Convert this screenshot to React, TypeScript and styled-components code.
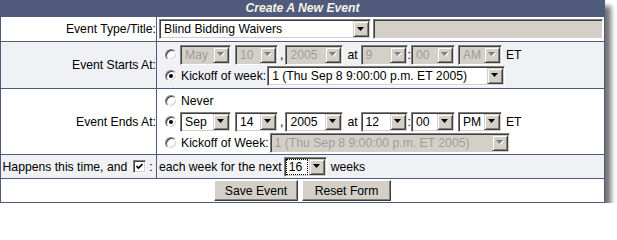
import React from "react";
import styled, { createGlobalStyle } from "styled-components";

const SLATE = "#4f5a7d";

const GlobalStyle = createGlobalStyle`
  body {
    margin: 0;
    background: #ffffff;
  }
`;

const Frame = styled.div`
  width: 603px;
  border: 1px solid ${SLATE};
  background: #ffffff;
  box-shadow: 6px 6px 5px rgba(0, 0, 0, 0.55);
  font-family: "Liberation Sans", Arial, sans-serif;
  font-size: 12.2px;
  color: #000000;
`;

const Header = styled.div`
  height: 15px;
  line-height: 15px;
  background: ${SLATE};
  color: #f4f3e6;
  font-weight: bold;
  font-style: italic;
  text-align: center;
`;

const Row = styled.div<{ $h: number; $shade?: boolean }>`
  display: grid;
  grid-template-columns: 156px 1fr;
  height: ${(p) => p.$h}px;
  border-top: 1px solid ${SLATE};
  background: ${(p) => (p.$shade ? "#eff1f4" : "#ffffff")};
`;

const Label = styled.div`
  box-sizing: border-box;
  display: flex;
  align-items: center;
  justify-content: flex-end;
  border-right: 1px solid ${SLATE};
  white-space: nowrap;
`;

const Field = styled.div<{ $pad?: string }>`
  display: flex;
  flex-direction: column;
  justify-content: center;
  padding: ${(p) => p.$pad || "0 2px"};
`;

const Line = styled.div<{ $h?: number }>`
  display: flex;
  align-items: center;
  height: ${(p) => p.$h || 21}px;
  white-space: nowrap;
`;

const Text = styled.span<{ $pad?: string }>`
  padding: ${(p) => p.$pad || "0"};
`;

const ButtonRow = styled.div`
  grid-column: 1 / -1;
  display: flex;
  justify-content: center;
  align-items: center;
  gap: 4px;
`;

const Box = styled.div<{ $w: number; $disabled?: boolean; $ml?: number }>`
  box-sizing: border-box;
  flex-shrink: 0;
  display: inline-flex;
  width: ${(p) => p.$w}px;
  height: 20px;
  margin-left: ${(p) => p.$ml || 0}px;
  padding: 1px;
  border: 1px solid;
  border-color: #808080 #ffffff #ffffff #808080;
  box-shadow: inset 1px 1px 0 #404040, inset -1px -1px 0 #d4d0c8;
  background: ${(p) => (p.$disabled ? "#d4d0c8" : "#ffffff")};
`;

const Value = styled.span<{ $disabled?: boolean; $focus?: boolean }>`
  flex: 1;
  display: flex;
  align-items: center;
  overflow: hidden;
  white-space: nowrap;
  padding-left: 3px;
  color: ${(p) => (p.$disabled ? "#9c9c9c" : "#000000")};
  ${(p) =>
    p.$focus &&
    `
    padding-left: 2px;
    margin: 0 1px 0 0;
    border: 1px dotted #000;
  `}
`;

const DropButton = styled.span`
  box-sizing: border-box;
  width: 16px;
  display: flex;
  align-items: center;
  justify-content: center;
  background: #d4d0c8;
  border: 1px solid;
  border-color: #d4d0c8 #404040 #404040 #d4d0c8;
  box-shadow: inset 1px 1px 0 #ffffff, inset -1px -1px 0 #808080;
`;

const TextBox = styled.div<{ $w: number }>`
  box-sizing: border-box;
  width: ${(p) => p.$w}px;
  height: 20px;
  margin-left: 2px;
  border: 1px solid;
  border-color: #808080 #ffffff #ffffff #808080;
  box-shadow: inset 1px 1px 0 #404040, inset -1px -1px 0 #d4d0c8;
  background: #d4d0c8;
`;

const RadioDot = styled.span<{ $on?: boolean }>`
  box-sizing: border-box;
  position: relative;
  flex-shrink: 0;
  width: 12px;
  height: 12px;
  margin: 0 3px 0 6px;
  border-radius: 50%;
  border: 1px solid;
  border-color: #808080 #ffffff #ffffff #808080;
  box-shadow: inset 1px 1px 0 #404040, inset -1px -1px 0 #d4d0c8;
  background: #ffffff;

  &::after {
    content: "";
    display: ${(p) => (p.$on ? "block" : "none")};
    position: absolute;
    left: 3px;
    top: 3px;
    width: 4px;
    height: 4px;
    border-radius: 50%;
    background: #000000;
  }
`;

const CheckBox = styled.span`
  box-sizing: border-box;
  display: inline-flex;
  align-items: center;
  justify-content: center;
  width: 13px;
  height: 13px;
  margin: 0 3px 0 6px;
  border: 1px solid;
  border-color: #808080 #ffffff #ffffff #808080;
  box-shadow: inset 1px 1px 0 #404040, inset -1px -1px 0 #d4d0c8;
  background: #ffffff;
`;

const PushButton = styled.button<{ $w: number }>`
  box-sizing: border-box;
  width: ${(p) => p.$w}px;
  height: 21px;
  padding: 0;
  font-family: "Liberation Sans", Arial, sans-serif;
  font-size: 12.2px;
  color: #000000;
  background: #d4d0c8;
  border: 1px solid;
  border-color: #ffffff #404040 #404040 #ffffff;
  box-shadow: inset -1px -1px 0 #808080;
  border-radius: 0;
`;

const Arrow: React.FC<{ disabled?: boolean }> = ({ disabled }) => (
  <svg width="8" height="5" viewBox="0 0 8 5">
    {disabled && <polygon points="1,1 8,1 4.5,5" fill="#ffffff" />}
    <polygon points="0,0 7,0 3.5,4" fill={disabled ? "#808080" : "#000000"} />
  </svg>
);

const Select: React.FC<{
  value: string;
  w: number;
  disabled?: boolean;
  focus?: boolean;
  ml?: number;
}> = ({ value, w, disabled, focus, ml }) => (
  <Box $w={w} $disabled={disabled} $ml={ml}>
    <Value $disabled={disabled} $focus={focus}>
      {value}
    </Value>
    <DropButton>
      <Arrow disabled={disabled} />
    </DropButton>
  </Box>
);

const DateTime: React.FC<{ d: string[]; disabled?: boolean }> = ({ d, disabled }) => (
  <>
    <Select value={d[0]} w={51} disabled={disabled} />
    <Select value={d[1]} w={43} ml={4} disabled={disabled} />
    <Text $pad="0 2px">,</Text>
    <Select value={d[2]} w={58} disabled={disabled} />
    <Text $pad="0 3px 0 4px">at</Text>
    <Select value={d[3]} w={47} disabled={disabled} />
    <Text $pad="0">:</Text>
    <Select value={d[4]} w={44} disabled={disabled} />
    <Select value={d[5]} w={44} ml={3} disabled={disabled} />
    <Text $pad="0 4px">ET</Text>
  </>
);

const KICKOFF = "1 (Thu Sep 8 9:00:00 p.m. ET 2005)";

export default function App() {
  return (
    <>
      <GlobalStyle />
      <Frame>
        <Header>Create A New Event</Header>

        <Row $h={24}>
          <Label>Event Type/Title:</Label>
          <Field $pad="0 1px 0 2px">
            <Line $h={24}>
              <Select value="Blind Bidding Waivers" w={212} />
              <TextBox $w={230} />
            </Line>
          </Field>
        </Row>

        <Row $h={46} $shade>
          <Label>Event Starts At:</Label>
          <Field>
            <Line>
              <RadioDot />
              <DateTime d={["May", "10", "2005", "9", "00", "AM"]} disabled />
            </Line>
            <Line>
              <RadioDot $on />
              <Text $pad="0 0 0 1px">Kickoff of week:</Text>
              <Select value={KICKOFF} w={238} ml={1} />
            </Line>
          </Field>
        </Row>

        <Row $h={65}>
          <Label>Event Ends At:</Label>
          <Field>
            <Line>
              <RadioDot />
              <Text $pad="0 0 0 1px">Never</Text>
            </Line>
            <Line>
              <RadioDot $on />
              <DateTime d={["Sep", "14", "2005", "12", "00", "PM"]} />
            </Line>
            <Line>
              <RadioDot />
              <Text $pad="0 0 0 1px">Kickoff of Week:</Text>
              <Select value={KICKOFF} w={240} ml={1} disabled />
            </Line>
          </Field>
        </Row>

        <Row $h={23} $shade>
          <Label>
            Happens this time, and
            <CheckBox>
              <svg width="7" height="7" viewBox="0 0 7 7">
                <polyline points="0.5,3 2.5,5 6.5,1" fill="none" stroke="#000" strokeWidth="1.6" />
              </svg>
            </CheckBox>
            :&nbsp;
          </Label>
          <Field>
            <Line>
              <Text>each week for the next</Text>
              <Select value="16" w={43} ml={2} focus />
              <Text $pad="0 4px">weeks</Text>
            </Line>
          </Field>
        </Row>

        <Row $h={23}>
          <ButtonRow>
            <PushButton $w={84}>Save Event</PushButton>
            <PushButton $w={89}>Reset Form</PushButton>
          </ButtonRow>
        </Row>
      </Frame>
    </>
  );
}
